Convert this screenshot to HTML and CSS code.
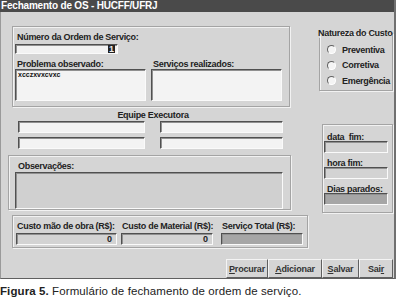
FILE: index.html
```html
<!DOCTYPE html>
<html lang="pt">
<head>
<meta charset="UTF-8">
<title>Fechamento de OS</title>
<link rel="stylesheet" href="styles.css">
</head>
<body>
<div class="window">
  <div class="titlebar">Fechamento de OS - HUCFF/UFRJ</div>
  <div class="form">
    <div class="group group-os">
      <div class="lbl">Número da Ordem de Serviço:</div>
      <div class="field field-num"><span class="sel">1</span></div>
      <div class="pair">
        <div class="col">
          <div class="lbl">Problema observado:</div>
          <div class="field memo">xcczxvxcvxc</div>
        </div>
        <div class="col">
          <div class="lbl">Serviços realizados:</div>
          <div class="field memo"></div>
        </div>
      </div>
    </div>

    <fieldset class="natureza">
      <legend>Natureza do Custo</legend>
      <div class="radio"><span class="dot"></span>Preventiva</div>
      <div class="radio"><span class="dot"></span>Corretiva</div>
      <div class="radio"><span class="dot"></span>Emergência</div>
    </fieldset>

    <div class="equipe">
      <div class="equipe-title">Equipe Executora</div>
      <div class="equipe-grid">
        <div class="field light"></div>
        <div class="field light"></div>
        <div class="field light"></div>
        <div class="field light"></div>
      </div>
    </div>

    <div class="group group-fim">
      <div class="lbl">data&nbsp; fim:</div>
      <div class="field short"></div>
      <div class="lbl">hora fim:</div>
      <div class="field short"></div>
      <div class="lbl">Dias parados:</div>
      <div class="field short dark"></div>
    </div>

    <div class="group group-obs">
      <div class="lbl">Observações:</div>
      <div class="field obs"></div>
    </div>

    <div class="group group-custo">
      <div class="custo c1">
        <div class="lbl">Custo mão de obra (R$):</div>
        <div class="field num">0</div>
      </div>
      <div class="custo c2">
        <div class="lbl">Custo de Material (R$):</div>
        <div class="field num">0</div>
      </div>
      <div class="custo c3">
        <div class="lbl">Serviço Total (R$):</div>
        <div class="field num dark"></div>
      </div>
    </div>

    <div class="buttons">
      <button class="btn b1"><u>P</u>rocurar</button>
      <button class="btn b2"><u>A</u>dicionar</button>
      <button class="btn b3"><u>S</u>alvar</button>
      <button class="btn b4">Sai<u>r</u></button>
    </div>
  </div>
</div>
<p class="caption"><b>Figura 5.</b> Formulário de fechamento de ordem de serviço.</p>
</body>
</html>
```

FILE: styles.css
```css
body {
  margin: 0;
  background: #fff;
  font-family: "Liberation Sans", Arial, sans-serif;
}
.window {
  width: 396px;
  height: 279px;
  box-sizing: border-box;
  background: #d5d5d5;
  border-right: 2px solid #707070;
  border-bottom: 1px solid #606060;
  border-left: 1px solid #9a9a9a;
}
.titlebar {
  height: 12px;
  background: #4a4a4a;
  color: #fff;
  font-weight: bold;
  font-size: 10px;
  line-height: 12px;
  padding-left: 1px;
  letter-spacing: -0.2px;
  margin-left: -1px;
}
.form {
  display: grid;
  grid-template-columns: 282px 29px 76px;
  grid-template-rows: 82px 45px 59px 38px 29px;
  padding: 14px 0 0 7px;
}
.lbl,
.equipe-title,
.radio,
.natureza legend {
  font-size: 9px;
  line-height: 10px;
  font-weight: bold;
  color: #222;
  letter-spacing: -0.3px;
  white-space: nowrap;
}
.group {
  box-sizing: border-box;
  border: 1px solid #a4a4a4;
  box-shadow: 1px 1px 0 #f2f2f2, inset 1px 1px 0 #f2f2f2;
}
.field {
  box-sizing: border-box;
  border-top: 1px solid #505050;
  border-left: 1px solid #505050;
  border-right: 1px solid #fafafa;
  border-bottom: 1px solid #fafafa;
  box-shadow: inset 1px 1px 0 #909090;
  background: #d3d3d3;
}
.group-os {
  grid-column: 1;
  grid-row: 1;
  margin-left: 4px;
  width: 278px;
  height: 81px;
  padding: 5px 0 0 2px;
}
.group-os > .lbl,
.col .lbl {
  margin-left: 2px;
}
.field-num {
  width: 103px;
  height: 10px;
  margin-top: 2px;
  background: #f2f2f2;
  display: flex;
  justify-content: flex-end;
  padding-right: 2px;
}
.sel {
  background: #222;
  color: #eee;
  font-size: 9px;
  line-height: 8px;
  font-weight: bold;
  padding: 0 1px;
}
.pair {
  display: flex;
  gap: 5px;
  margin-top: 5px;
}
.col {
  width: 131px;
}
.memo {
  height: 32px;
  background: #f3f3f3;
  font-size: 7px;
  font-weight: bold;
  line-height: 9px;
  padding-left: 2px;
  color: #111;
}
.natureza {
  grid-column: 3;
  grid-row: 1;
  margin: 2px 0 0 0;
  padding: 4px 0 0 0;
  width: 74px;
  height: 63px;
  box-sizing: border-box;
  border: 1px solid #a4a4a4;
  box-shadow: 1px 1px 0 #f2f2f2, inset 1px 1px 0 #f2f2f2;
}
.natureza legend {
  padding: 0;
  margin-left: -2px;
}
.radio {
  display: flex;
  align-items: center;
  height: 15.5px;
  padding-left: 7px;
}
.dot {
  width: 9px;
  height: 9px;
  box-sizing: border-box;
  border-radius: 50%;
  background: #f4f4f4;
  border: 1px solid #fff;
  border-top-color: #606060;
  border-left-color: #606060;
  margin-right: 6px;
}
.equipe {
  grid-column: 1;
  grid-row: 2;
  padding: 2px 0 0 10px;
}
.equipe-title {
  text-align: center;
  width: 270px;
}
.equipe-grid {
  display: grid;
  grid-template-columns: 127px 123px;
  column-gap: 15px;
  row-gap: 4px;
  margin-top: 1px;
}
.light {
  height: 12px;
  background: #f3f3f3;
}
.group-fim {
  grid-column: 3;
  grid-row: 2 / span 3;
  align-self: start;
  margin: 16px 0 0 3px;
  width: 71px;
  height: 89px;
  padding: 7px 0 0 1px;
}
.group-fim .lbl {
  margin-left: 3px;
  height: 9px;
}
.short {
  width: 64px;
  height: 12px;
  margin: 0 0 5px 0;
}
.dark {
  background: #a6a6a6;
}
.group-obs {
  grid-column: 1;
  grid-row: 3;
  margin-top: 2px;
  width: 283px;
  height: 55px;
  padding: 5px 0 0 6px;
}
.group-obs .lbl {
  margin-left: 3px;
  margin-bottom: 1px;
}
.obs {
  width: 268px;
  height: 37px;
  background: #d0d0d0;
}
.group-custo {
  grid-column: 1 / span 2;
  grid-row: 4;
  margin: 3px 0 0 4px;
  width: 296px;
  height: 33px;
  display: flex;
  padding: 5px 0 0 3px;
}
.custo .lbl {
  margin-left: 1px;
  margin-bottom: 2px;
}
.c1 { width: 101px; margin-right: 4px; }
.c2 { width: 92px; margin-right: 8px; }
.c3 { width: 82px; }
.num {
  height: 12px;
  font-size: 9px;
  font-weight: bold;
  line-height: 10px;
  text-align: right;
  padding-right: 4px;
  color: #222;
}
.buttons {
  grid-column: 1 / -1;
  grid-row: 5;
  justify-self: end;
  display: flex;
  margin: 9px 2px 0 0;
}
.btn {
  height: 19px;
  box-sizing: border-box;
  padding: 0;
  font-family: "Liberation Sans", Arial, sans-serif;
  font-size: 9px;
  font-weight: bold;
  color: #333;
  letter-spacing: -0.2px;
  background: #d5d5d5;
  border: 1px solid #f4f4f4;
  border-right-color: #606060;
  border-bottom-color: #606060;
}
.b1 { width: 42px; }
.b2 { width: 54px; }
.b3 { width: 37px; }
.b4 { width: 34px; }
.caption {
  margin: 6px 0 0 0;
  font-size: 11.5px;
  line-height: 12px;
  letter-spacing: 0.1px;
  color: #222;
}
```
